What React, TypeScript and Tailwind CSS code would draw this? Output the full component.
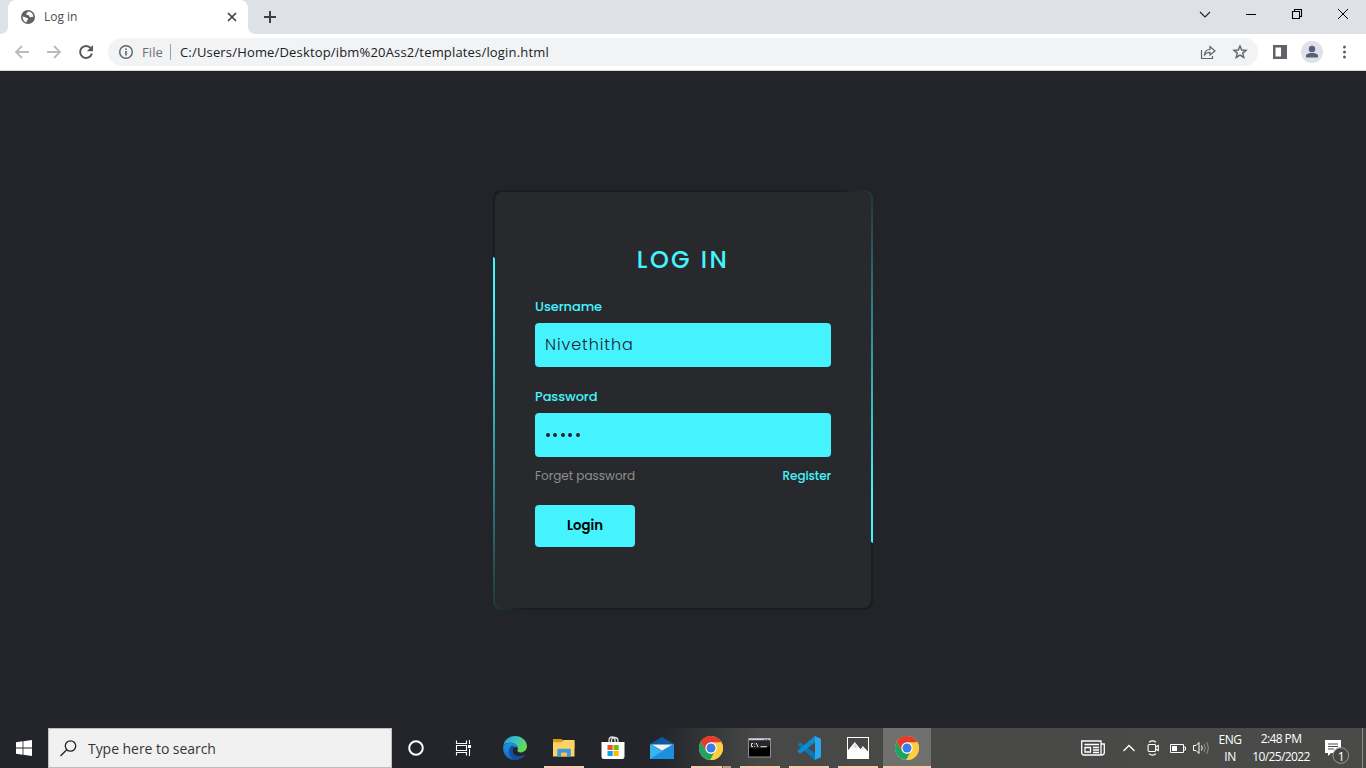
import type { ReactNode } from 'react';

function Globe() {
  return (
    <svg width="16" height="16" viewBox="0 0 16 16">
      <circle cx="8" cy="8" r="7" fill="#5f6368" />
      <path d="M2.6 7.2 C4 8.2 5 8 6 8.6 C7.2 9.3 8.2 9 8 10.3 C7.7 11.4 6.7 11.2 6.5 13.4 C4 12.7 2.3 10.5 2.6 7.2Z M8.2 2.4 C7 3 7.2 4.2 6.2 4.8 C6 6.2 7.4 6 8.4 6 C9.2 7 9.4 8 10.6 8.2 C11.8 8.2 12.6 7.4 13.4 8.2 C13.5 5 11.5 2.7 8.2 2.4Z" fill="#fff" />
    </svg>
  );
}

function Chrome() {
  return (
    <svg width="24" height="24" viewBox="0 0 24 24">
      <circle cx="12" cy="12" r="12" fill="#ffcd40" />
      <path d="M1.6 6 A12 12 0 0 1 22.6 6.4 H12 L7 15Z" fill="#e33b2e" />
      <path d="M1.6 6 L7.1 15 A5.6 5.6 0 0 0 15 16.7 L11.3 23.98 A12 12 0 0 1 1.6 6Z" fill="#1da462" />
      <path d="M12 6.4 H22.6 A12 12 0 0 1 11.3 24 L17 14.8Z" fill="#ffcd40" />
      <circle cx="12" cy="12" r="5.7" fill="#fff" />
      <circle cx="12" cy="12" r="4.5" fill="#3b7de8" />
    </svg>
  );
}

function Edge() {
  return (
    <svg width="24" height="24" viewBox="0 0 24 24">
      <defs>
        <linearGradient id="edgeTop" x1="0" y1="0" x2="1" y2="0.4">
          <stop offset="0" stopColor="#2499d8" />
          <stop offset="0.5" stopColor="#35c1c9" />
          <stop offset="1" stopColor="#66db52" />
        </linearGradient>
        <linearGradient id="edgeLow" x1="0" y1="0" x2="0" y2="1">
          <stop offset="0" stopColor="#1f93df" />
          <stop offset="1" stopColor="#1068c0" />
        </linearGradient>
      </defs>
      <path d="M0.3 10 C1 4 6 0 12 0 C19 0 24 5 24 10.6 C24 14 21 16.4 18 16.4 C15 16.4 13.8 15.3 14.4 14.4 C16 12 14 8 9.5 7 C5 6.2 1.5 7.5 0.3 10Z" fill="url(#edgeTop)" />
      <path d="M0.1 12 C0.4 8.6 4 6.8 8 7.1 C12 7.4 14.6 9.8 14.8 12 C12.5 9.7 9 11.5 9.4 15 C9.8 20 15.5 22.3 21.8 18.8 C19.6 22 16 24 12 24 C5.2 24 0 18.5 0.1 12Z" fill="url(#edgeLow)" />
      <path d="M8.2 9.9 C5 12.5 5 19.5 10 23.6 C14.5 24.8 19 22.8 21.8 18.8 C16 21.6 9.8 20 9.4 15 C9.3 12.9 10.3 11.5 11.8 10.9 C10.7 9.9 9.3 9.5 8.2 9.9Z" fill="#12509e" />
    </svg>
  );
}

function Folder() {
  return (
    <svg width="22" height="20" viewBox="0 0 22 20">
      <path d="M0 1 H8.6 L10.4 3 H21.5 V10 H0Z" fill="#e19a0c" />
      <path d="M0 4.2 H8.8 L10.5 2 H21.5 V18.4 H0Z" fill="#fdd365" />
      <path d="M4.3 18.8 V12 Q4.3 10.8 5.5 10.8 H16.5 Q17.8 10.8 17.8 12 V18.8 H13.8 V14.8 H8.2 V18.8Z" fill="#3f97dd" />
      <path d="M8.2 14.8 H13.8 V18.4 H8.2Z" fill="#f4c455" />
    </svg>
  );
}

function Store() {
  return (
    <svg width="24" height="24" viewBox="0 0 24 24">
      <path d="M8 7 V4.5 Q8 1 11 1 Q14 1 14 4.5 V7 M10.5 7 V5 Q10.5 1.5 13.5 1.5 Q17 1.5 17 5 V7" fill="none" stroke="#e6e6e6" strokeWidth="1.3" />
      <path d="M0.5 6 H23.5 V20.8 Q23.5 23 21.2 23 H2.8 Q0.5 23 0.5 20.8Z" fill="#fff" />
      <path d="M6.500 9h5.200v5h-5.200z" fill="#f25022" />
      <path d="M12.500 9h5.200v5h-5.200z" fill="#7fba00" />
      <path d="M6.500 15h5.200v5h-5.200z" fill="#00a4ef" />
      <path d="M12.500 15h5.200v5h-5.200z" fill="#ffb900" />
    </svg>
  );
}

function Mail() {
  return (
    <svg width="24" height="24" viewBox="0 0 24 24">
      <path d="M0 8 L12 1 L24 8 V12 H0Z" fill="#0c59a4" />
      <path d="M0 8 L12 15 L24 8 V23 H0Z" fill="#33b5ee" />
      <path d="M0 23 L24 8 V23Z" fill="#1c8fe0" />
      <path d="M1.5 8.5 H22.5 L12 14.7Z" fill="#f2f2f2" />
    </svg>
  );
}

function Terminal() {
  return (
    <svg width="24" height="20" viewBox="0 0 24 20">
      <rect x="0.5" y="0.5" width="22" height="18.500" fill="#000" stroke="#8b8f94" />
      <rect x="1" y="0.5" width="21" height="2" fill="#cfd5df" />
      <path d="M16.500 1.500h1.300M19 1.500h1.300" stroke="#4869a8" />
      <path d="M1.2 10 Q11 12 22 8 V2.500 H1.2Z" fill="#272727" />
      <path d="M5 5.500 H3.500 V8.500 H5 M6.700 5.500 v.9 M6.700 7.900 v.9 M8.300 5 L10 9 M12.500 8.700 H19" fill="none" stroke="#e8e8e8" strokeWidth="1" />
    </svg>
  );
}

function Code() {
  return (
    <svg width="24" height="24" viewBox="0 0 24 24">
      <path d="M1.1 8 L2.6 6.7 Q3.2 6.4 3.8 6.8 L23 21.2 L17.8 23.9 L0.9 9.3 Q0.3 8.6 1.1 8Z" fill="#0877b9" />
      <path d="M1.1 16 L2.6 17.4 Q3.2 17.7 3.8 17.2 L23 2.6 L17.8 0.1 L0.9 14.6 Q0.3 15.4 1.1 16Z" fill="#118bd0" />
      <path d="M17.5 0 L23.2 2.4 Q24 2.8 24 3.8 V20.2 Q24 21.2 23.2 21.6 L17.5 24 Q18 23.5 18 22.5 V1.5 Q18 .5 17.5 0Z" fill="#2aa7f2" />
    </svg>
  );
}

function Photos() {
  return (
    <svg width="22" height="22" viewBox="0 0 22 22">
      <rect x="0.5" y="0.5" width="21" height="21" fill="none" stroke="#fff" />
      <path d="M0 21.5 V14.5 L7.8 5 L13.6 12.3 L15.8 9 L22 15.5 V22 H0Z" fill="#fff" />
      <path d="M7.8 6 L5.3 11.2 L7.2 9.8 L9 12 L10.2 10Z M15.8 9.7 L14.5 13 L16 12.2 L17.7 13Z" fill="#4b4c4a" opacity="0.2" />
    </svg>
  );
}

type TaskProps = { children: ReactNode; open?: boolean; active?: boolean; stacked?: boolean };

function Task({ children, open, active, stacked }: TaskProps) {
  return (
    <div className={`flex h-10 flex-col items-center ${active ? 'ml-px w-12 bg-[#70716f]' : 'w-[49px]'}`}>
      <div className="flex h-[38px] items-center justify-center pt-0.5">{children}</div>
      <div className={`flex h-0.5 ${active ? 'w-12' : 'w-10'} ${open || active ? 'bg-[#fbc9b4]' : ''}`}>
        {stacked && <div className="ml-[31px] w-[9px] border-l border-[#775f55] bg-[#c19d8d]" />}
      </div>
    </div>
  );
}

function BrowserChrome() {
  return (
    <header className="h-[71px] border-b border-[#d8dade] bg-white">
      <div className="flex h-[34px] items-start bg-[#dee1e6]">
        <svg className="mt-[26px]" width="8" height="8"><path d="M8 0V8H0Q8 8 8 0Z" fill="#fff" /></svg>
        <div className="flex h-[34px] w-60 items-center rounded-t-lg bg-white pl-3">
          <Globe />
          <span className="ml-2 w-[180px] text-xs tracking-[-0.05px] text-[#4a4e52]">Log in</span>
          <svg width="16" height="16" viewBox="0 0 16 16"><path d="M4 4L12 12M12 4L4 12" stroke="#3c4043" strokeWidth="1.7" /></svg>
        </div>
        <svg className="mt-[26px]" width="8" height="8"><path d="M0 0V8H8Q0 8 0 0Z" fill="#fff" /></svg>
        <svg className="ml-[6px] mt-[9px]" width="16" height="16"><path d="M8 2V14M2 8H14" stroke="#3c4043" strokeWidth="2" /></svg>
        <div className="ml-auto flex pt-[6px]">
          <svg width="46" height="16"><path d="M18 6L23 11L28 6" fill="none" stroke="#222" strokeWidth="1.1" /></svg>
          <svg width="46" height="16"><path d="M18 8.5H28" stroke="#000" /></svg>
          <svg width="46" height="16"><path d="M18.500 5.500h7v7h-7zM20.500 5.500v-2h7v7h-2" fill="none" stroke="#000" strokeWidth="1.1" /></svg>
          <svg width="46" height="16"><path d="M18 3L28 13M28 3L18 13" stroke="#000" /></svg>
        </div>
      </div>
      <div className="flex h-9 items-center">
        <svg className="ml-[14px]" width="16" height="16"><path d="M15 8H2M8 2L2 8L8 14" fill="none" stroke="#b9bbbe" strokeWidth="1.8" /></svg>
        <svg className="ml-4" width="16" height="16"><path d="M1 8H14M8 2L14 8L8 14" fill="none" stroke="#b9bbbe" strokeWidth="1.8" /></svg>
        <svg className="ml-4" width="16" height="16"><path d="M12.8 4.200A6 6 0 1 0 13.900 9.500" fill="none" stroke="#55595e" strokeWidth="2" /><path d="M15 1V7.200H8.800Z" fill="#55595e" /></svg>
        <div className="ml-[14px] flex h-7 w-[1150px] items-center rounded-full bg-[#f1f3f4] pl-[10px]">
          <svg width="16" height="16"><circle cx="8" cy="8" r="6.300" fill="none" stroke="#5f6368" strokeWidth="1.4" /><path d="M8 7V11.500M8 4.400V6" stroke="#5f6368" strokeWidth="1.6" /></svg>
          <span className="ml-2 w-7 pt-px text-[13px] tracking-[0.1px] text-[#6b6f74]">File</span>
          <div className="h-4 w-px bg-[#9a9da1]" />
          <span className="ml-[9px] whitespace-nowrap pt-px text-[13px] tracking-[0.17px] text-[#202124]">C:/Users/Home/Desktop/ibm%20Ass2/templates/login.html</span>
          <svg className="ml-auto" width="16" height="16" viewBox="0 0 16 16"><path d="M1.500 6V14.500H12.500V12M4.500 11Q4.800 5.500 10 5.500V2.500L15 7L10 11V8.300Q6.500 8.100 4.500 11Z" fill="none" stroke="#5f6368" strokeWidth="1.2" /></svg>
          <svg className="ml-4 mr-[10px]" width="16" height="16" viewBox="0 0 16 16"><path d="M8 2L9.700 6L14 6.300L10.700 9.100L11.800 13.400L8 11.100L4.200 13.400L5.300 9.100L2 6.300L6.300 6Z" fill="none" stroke="#5f6368" strokeWidth="1.4" /></svg>
        </div>
        <svg className="ml-[14px]" width="16" height="16"><path d="M1 1H15V15H1ZM3.500 3.500V12.500H9V3.500Z" fill="#5f6368" fillRule="evenodd" /></svg>
        <svg className="ml-[13px]" width="22" height="22"><circle cx="11" cy="11" r="11" fill="#dee1e6" /><circle cx="11" cy="8" r="3.200" fill="#55607a" /><path d="M5 16.500V14.800C5 12.500 9 12 11 12S17 12.500 17 14.800V16.500Z" fill="#55607a" /></svg>
        <svg className="ml-[14px]" width="16" height="16" fill="#5f6368"><circle cx="7.500" cy="3" r="1.500" /><circle cx="7.500" cy="8" r="1.500" /><circle cx="7.500" cy="13" r="1.500" /></svg>
      </div>
    </header>
  );
}

function LoginCard() {
  const beam = 'absolute -left-1/2 -top-1/2 h-[420px] w-[380px] origin-bottom-right bg-[linear-gradient(0deg,transparent,#45f3ff,#45f3ff)]';
  return (
    <div className="relative h-[420px] w-[380px] overflow-hidden rounded-lg bg-[#1c1c1c] p-0.5">
      <div className={`${beam} rotate-[-53deg]`} />
      <div className={`${beam} rotate-[127deg]`} />
      <form className="relative flex h-[416px] flex-col rounded-lg bg-[#28292d] px-10 pt-[52px] font-['Poppins','Inter',sans-serif]">
        <h2 className="h-8 text-center text-2xl font-medium leading-8 tracking-[2.4px] text-[#45f3ff]">LOG IN</h2>
        <label className="mt-[21px] h-5 text-[13px] font-medium leading-5 tracking-[-0.08px] text-[#45f3ff]">Username</label>
        <div className="mt-1.5 flex h-11 items-center rounded bg-[#45f3ff] px-2.5 text-base font-light tracking-[0.92px] text-[#23242a]">Nivethitha</div>
        <label className="mt-5 h-5 text-[13px] font-medium leading-5 tracking-[-0.1px] text-[#45f3ff]">Password</label>
        <div className="mt-1.5 flex h-11 items-center gap-[3.400px] rounded bg-[#45f3ff] pl-[11px]">
          {[0, 1, 2, 3, 4].map((i) => <span key={i} className="h-1 w-1 rounded-full bg-[#23242a]" />)}
        </div>
        <div className="mt-[9px] flex h-5 items-center justify-between text-xs">
          <a className="text-[#8f8f8f]">Forget password</a>
          <a className="font-medium tracking-[-0.1px] text-[#45f3ff]">Register</a>
        </div>
        <button type="button" className="mt-[19px] h-[42px] w-[100px] rounded bg-[#45f3ff] text-[13.300px] font-semibold text-black">Login</button>
      </form>
    </div>
  );
}

function Taskbar() {
  return (
    <footer className="flex h-10 items-center bg-[linear-gradient(90deg,#24252a_0px,#24252a_660px,#484947_760px,#4a4b49_1366px)] text-white">
      <div className="flex w-12 justify-center">
        <svg width="16" height="16" fill="#fff"><path d="M0 2.200L6.600 1.300V7.500H0ZM7.400 1.200L16 0V7.500H7.400ZM0 8.400H6.600V14.700L0 13.800ZM7.400 8.400H16V16L7.400 14.800Z" /></svg>
      </div>
      <div className="flex h-10 w-[344px] items-center border border-[#bfbfbf] bg-[#f1f1f1] pl-[11px]">
        <svg width="17" height="17" viewBox="0 0 17 17" fill="none" stroke="#222" strokeWidth="1.3"><circle cx="10.500" cy="6" r="5.200" /><path d="M6.700 9.800L0.500 16" /></svg>
        <span className="ml-[11px] text-[14px] tracking-[-0.05px] text-[#33373a]">Type here to search</span>
      </div>
      <div className="flex w-12 justify-center"><svg width="16" height="16"><circle cx="8" cy="8" r="6.800" fill="none" stroke="#fff" strokeWidth="2" /></svg></div>
      <div className="flex w-[50px] justify-center pr-0.5">
        <svg width="18" height="16" fill="none" stroke="#fff" strokeWidth="1.1"><path d="M1.500 .500V3.500H11.500V.500M1.500 15.500V12.500H11.500V15.500M1.500 5.500H11.500V10.500H1.500ZM14.500 0V4M14.500 9V16" /><path d="M13 5h3v3h-3z" fill="#fff" stroke="none" /></svg>
      </div>
      <Task><Edge /></Task>
      <Task open><Folder /></Task>
      <Task><Store /></Task>
      <Task><Mail /></Task>
      <Task open stacked><Chrome /></Task>
      <Task open><Terminal /></Task>
      <Task open><Code /></Task>
      <Task open><Photos /></Task>
      <Task active><Chrome /></Task>
      <svg className="ml-[150px]" width="24" height="16" fill="none" stroke="#fff" strokeWidth="1.3"><path d="M.700 1H20V15H3Q.700 15 .700 12.500ZM20 4H23.300V12.500Q23.300 15 20.500 15M3.500 4.500H18M4 7.500H9.500V12H4ZM12 7.500H18M12 10H18M12 12.500H18" /></svg>
      <svg className="ml-[18px]" width="12" height="8"><path d="M.500 7L6 1.500L11.500 7" fill="none" stroke="#fff" strokeWidth="1.3" /></svg>
      <svg className="ml-[12px]" width="12" height="16" fill="none" stroke="#fff" strokeWidth="1.1"><rect x="1.100" y="4.500" width="7.500" height="7" rx="1" /><path d="M8.500 7L11.300 5.500V10.500L8.500 9M2 2.200Q5.500-.500 9 2.200M2 13.800Q5.500 16.500 9 13.800" /></svg>
      <svg className="ml-[11px]" width="16" height="16"><path d="M.500 4.500H13.500V12.500H.500ZM14 7H15.500V10H14" fill="none" stroke="#fff" /><path d="M2 6h5v5H2z" fill="#fff" /></svg>
      <svg className="ml-[7px]" width="17" height="16" fill="none" stroke="#fff"><path d="M.500 5.500H3L6 2.500V13.500L3 10.500H.500Z" /><path d="M8.500 5.500Q10 8 8.500 10.500" /><path d="M11 4Q13.500 8 11 12M13.500 2Q17 8 13.500 14" stroke="#929391" /></svg>
      <div className="ml-[6px] w-7 pb-px text-center text-xs leading-[17px] tracking-[-0.5px]">ENG<br />IN</div>
      <div className="ml-[5px] w-[64px] whitespace-nowrap pb-px text-center text-xs leading-[18px] tracking-[-0.6px]">2:48 PM<br />10/25/2022</div>
      <div className="relative ml-[11px] mt-2 h-6 w-7">
        <svg width="28" height="24"><path d="M1 0H17V13H7L4 16V13H1Z" fill="#fff" /><path d="M4 4H14M4 6.500H14M4 9H10" stroke="#4a4b49" /><circle cx="16.800" cy="15.500" r="7.800" fill="#464745" stroke="#999" /></svg>
        <span className="absolute left-[13.500px] top-[7.500px] text-[13px] leading-4">1</span>
      </div>
      <div className="ml-auto mr-[3px] h-10 w-px bg-[#8b8c8a]" />
    </footer>
  );
}

export default function App() {
  return (
    <div className="flex h-[768px] w-[1366px] flex-col overflow-hidden font-['Open_Sans','Noto_Sans',sans-serif]">
      <BrowserChrome />
      <main className="flex h-[657px] justify-center border-t border-[#1d1e21] bg-[#23242a] pt-[118px]">
        <LoginCard />
      </main>
      <Taskbar />
    </div>
  );
}
